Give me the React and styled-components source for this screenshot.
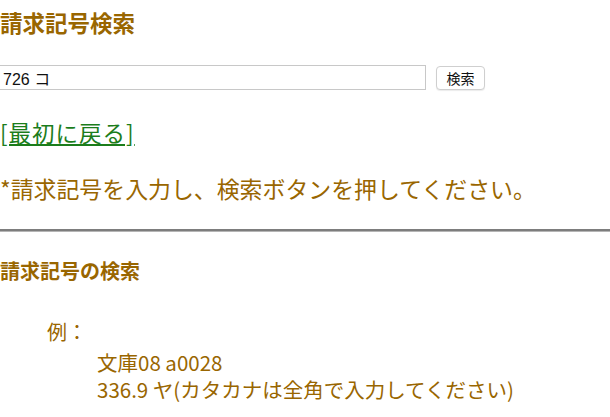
import React, { useState } from "react";
import styled, { createGlobalStyle } from "styled-components";

const EXAMPLES = ["文庫08 a0028", "336.9 ヤ(カタカナは全角で入力してください)"];

const GlobalStyle = createGlobalStyle`
  body {
    margin: 0;
    background: #fff;
    font-family: "Liberation Sans", "Noto Sans CJK JP", sans-serif;
  }
`;

function App() {
  const [code, setCode] = useState("726 コ");

  return (
    <Page>
      <GlobalStyle />
      <Title>請求記号検索</Title>
      <SearchForm onSubmit={e => e.preventDefault()}>
        <SearchInput value={code} onChange={e => setCode(e.target.value)} />
        <SearchButton type="submit">検索</SearchButton>
      </SearchForm>
      <BackLink href="#">[最初に戻る]</BackLink>
      <Note>*請求記号を入力し、検索ボタンを押してください。</Note>
      <Rule />
      <Title sub>請求記号の検索</Title>
      <ExampleLabel>例：</ExampleLabel>
      <ExampleList>
        {EXAMPLES.map(item => (
          <ExampleItem key={item}>{item}</ExampleItem>
        ))}
      </ExampleList>
    </Page>
  );
}

export default App;

const Page = styled.div`
  display: flex;
  flex-direction: column;
  align-items: flex-start;
  color: #996600;
  font-family: "Noto Sans CJK JP", "Liberation Sans", sans-serif;
`;

const Title = styled.h2`
  margin: ${({ sub }) => (sub ? "24px 0 0" : "6px 0 0")};
  font-size: ${({ sub }) => (sub ? "20px" : "22.5px")};
  line-height: ${({ sub }) => (sub ? "30px" : "32px")};
  font-weight: bold;
  color: #996600;
`;

const SearchForm = styled.form`
  display: flex;
  align-items: center;
  gap: 10px;
  margin: 27px 0 0 -1px;
  height: 25px;
`;

const SearchInput = styled.input`
  box-sizing: border-box;
  width: 427px;
  height: 25px;
  padding: 0 3px;
  border: 1px solid #c8c8c8;
  font-family: "Liberation Sans", "Noto Sans CJK JP", sans-serif;
  font-size: 16px;
  color: #111;
  outline: none;
`;

const SearchButton = styled.button`
  box-sizing: border-box;
  width: 49px;
  height: 24px;
  padding: 0;
  border: 1px solid #cfcfcf;
  border-radius: 4px;
  background: #fff;
  box-shadow: 0 1px 1px rgba(0, 0, 0, 0.08);
  font-family: "Noto Sans CJK JP", sans-serif;
  font-size: 14px;
  color: #111;
`;

const BackLink = styled.a`
  margin-top: 27px;
  font-size: 22.5px;
  line-height: 30px;
  letter-spacing: 1px;
  color: #1b7d1b;
  text-decoration: underline;
  text-underline-offset: 2px;
`;

const Note = styled.p`
  margin: 26px 0 0;
  font-size: 22.9px;
  line-height: 30px;
`;

const Rule = styled.hr`
  width: 100%;
  box-sizing: border-box;
  margin: 26px 0 0;
  height: 0;
  border: none;
  border-top: 2px solid #7d7d7d;
  border-bottom: 1px solid #b5b5b5;
`;

const ExampleLabel = styled.div`
  margin: 32px 0 0 47px;
  font-size: 20px;
  line-height: 28px;
`;

const ExampleList = styled.ul`
  list-style: none;
  margin: 3px 0 0 97px;
  padding: 0;
`;

const ExampleItem = styled.li`
  font-size: 20.5px;
  line-height: 27px;
  white-space: nowrap;
`;
